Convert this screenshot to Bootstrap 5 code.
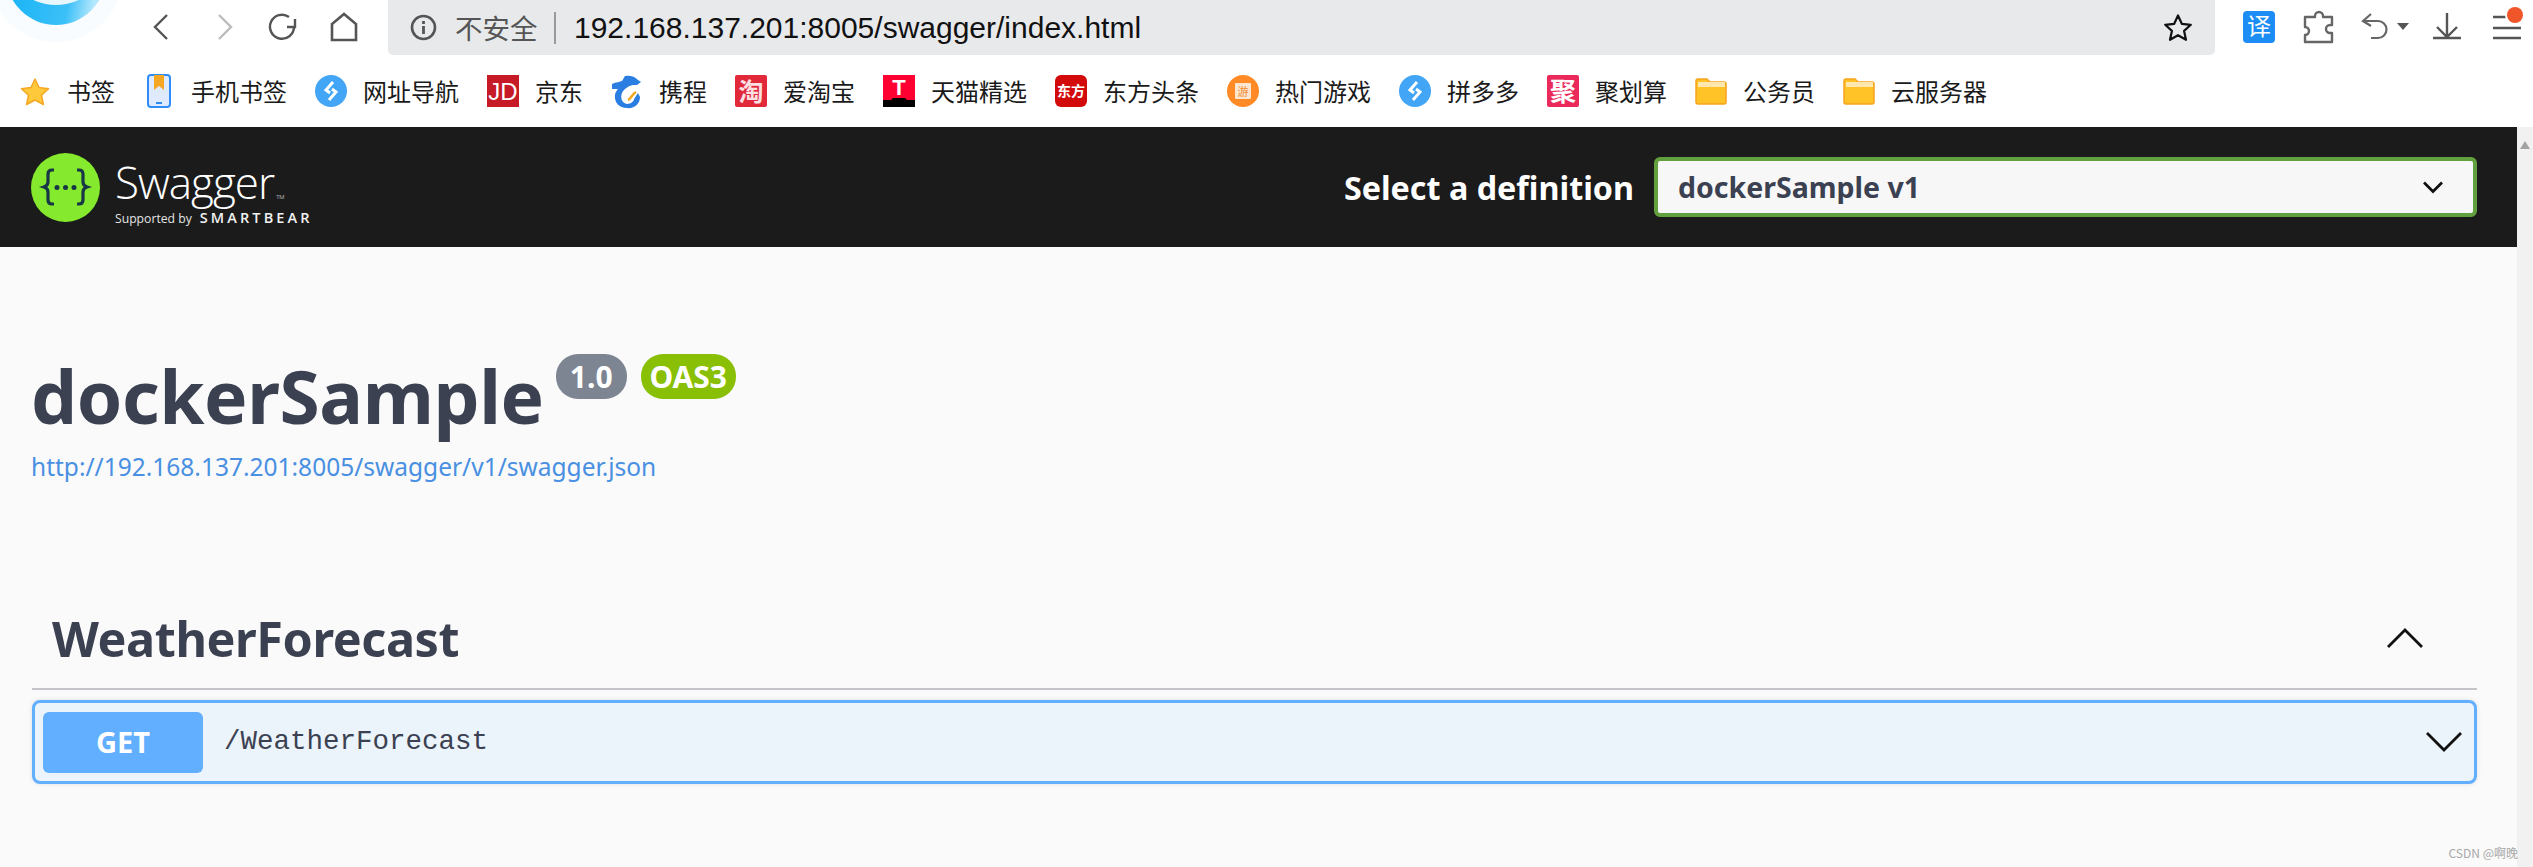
<!DOCTYPE html>
<html lang="zh-CN">
<head>
<meta charset="utf-8">
<title>Swagger UI</title>
<link href="https://cdn.jsdelivr.net/npm/bootstrap@5.3.0/dist/css/bootstrap.min.css" rel="stylesheet">
<style>
html,body{height:100%;overflow:hidden;background:#fff}
body{font-family:"Noto Sans","Noto Sans CJK SC",sans-serif;color:#3b4151}
.cn{font-family:"Noto Sans CJK SC",sans-serif}
.tool-row{height:55px}
.tool-left{width:388px;height:55px;flex:none}
.tool-right{width:318px;height:55px;flex:none}
.addr{background:#e8e9eb;border-radius:0 0 5px 5px;height:55px;padding:0 22px 0 22px}
.addr-label{font-size:27.5px;color:#555;margin-left:18px;width:84px;white-space:nowrap;line-height:1.2}
.addr-sep{width:2px;height:32px;background:#9a9a9a;margin:0 18px 0 15px}
.addr-url{font-family:"Liberation Sans",sans-serif;font-size:30px;color:#111;line-height:1.2}
.marks{height:72px;padding-left:19px;gap:28px;font-size:24px;color:#1a1a1a}
.mark-item{gap:16px}
.mark-item svg{width:32px;height:36px;flex:none}
.page-wrap{height:740px}
.page-main{background:#fafafa;min-width:0}
.sbar{width:16px;background:#f1f1f1;flex:none}
.sbar svg{display:block;width:16px;height:36px}
.topbar{height:120px;background:#1b1b1b;padding:0 40px 0 31px}
.sw-mark{width:69px;height:69px;flex:none}
.sw-brand{margin-left:15px;color:#fff;line-height:1}
.sw-name{font-family:"Open Sans",sans-serif;font-weight:300;font-size:44px;line-height:50px;letter-spacing:-1px;margin-top:8px}
.sw-name sup{font-size:6px;letter-spacing:0;top:0;vertical-align:baseline;margin-left:2px}
.sw-sub{font-family:"Open Sans",sans-serif;font-size:12.2px;margin-top:4px;color:#e4e4e4;white-space:nowrap}
.sw-bear{font-weight:600;font-size:14.5px;letter-spacing:3.1px;margin-left:8px;color:#f2f2f2}
.def-label{font-size:32.3px;font-weight:700;color:#fff;margin-right:20px;line-height:1.2}
.def-select{width:823px;height:60px;border:4px solid #62a03f;border-radius:6px;background-color:#f7f7f7;color:#3b4151;font-size:28.5px;font-weight:700;padding:0 60px 0 20px;background-image:url("data:image/svg+xml,%3csvg xmlns='http://www.w3.org/2000/svg' viewBox='0 0 16 12'%3e%3cpath fill='none' stroke='%23111' stroke-width='1.8' d='M2 3l6 6 6-6'/%3e%3c/svg%3e");background-position:right 28px center;background-size:24px 18px;line-height:1.2}
.info-block{padding:101px 40px 0 31px}
.ttl{font-size:73px;font-weight:700;line-height:96px;margin:0;color:#3b4151;letter-spacing:-.4px}
.pill{height:45px;border-radius:22px;color:#fff;font-weight:700;font-size:30px;line-height:1;margin-top:6px}
.pill-ver{width:71px;background:#7d8492;margin-left:12px}
.pill-oas{width:95px;background:#89bf04;margin-left:14px}
.spec-link{font-size:24.5px;color:#4990e2;text-decoration:none;line-height:36px;display:block;margin-top:5px}
.tag-sec{padding:0 40px 0 32px;margin-top:103px}
.tag-head{height:102px;border-bottom:2px solid #c4c4c9;padding:0 54px 0 20px}
.tag-name{font-size:48.5px;font-weight:700;line-height:1.2;margin:0;color:#3b4151;letter-spacing:-.4px}
.op-row{margin-top:10px;height:84px;background:#ebf3fb;border:3px solid #61affe;border-radius:8px;box-shadow:0 0 5px rgba(0,0,0,.1);padding:0 12px 0 8px}
.op-verb{width:160px;height:61px;background:#61affe;border-radius:6px;color:#fff;font-weight:700;font-size:29px;border:0;padding:0}
.op-path{font-family:"Liberation Mono",monospace;font-size:27.5px;color:#3b4151;margin-left:21px}
.wm{position:absolute;right:15px;bottom:8px;font-size:12px;color:#a8a8a8;line-height:1}
</style>
</head>
<body>
<div class="d-flex tool-row">
  <svg class="tool-left" viewBox="0 0 388 55" fill="none">
    <defs><linearGradient id="lg" x1="0" y1="0" x2="1" y2=".2"><stop offset="0" stop-color="#0fb0f5"/><stop offset=".75" stop-color="#3cc0f8"/><stop offset="1" stop-color="#b5e8fc"/></linearGradient></defs>
    <circle cx="56" cy="-25" r="67" fill="#f8fcfe"/>
    <circle cx="56" cy="-25" r="50" fill="url(#lg)"/>
    <circle cx="56" cy="-48" r="53" fill="#e8f7fe"/>
    <path d="M167 15 155 27l12 12" stroke="#555" stroke-width="2.4"/>
    <path d="M219 15l12 12-12 12" stroke="#bbb" stroke-width="2.4"/>
    <path d="M294 27a12 12 0 1 1-5-10" stroke="#555" stroke-width="2.4"/>
    <path d="M295 19v8h-8" stroke="#555" stroke-width="2.4"/>
    <path d="M332 40V24l12-10 12 10v16z" stroke="#555" stroke-width="2.6"/>
  </svg>
  <div class="addr d-flex align-items-center flex-grow-1">
    <svg width="27" height="27" viewBox="0 0 27 27" fill="none"><circle cx="13.5" cy="13.5" r="11.5" stroke="#555" stroke-width="2.6"/><path d="M13.5 12v8M13.5 7v3" stroke="#555" stroke-width="2.8"/></svg>
    <span class="addr-label cn">不安全</span>
    <span class="addr-sep"></span>
    <span class="addr-url">192.168.137.201:8005/swagger/index.html</span>
    <svg class="ms-auto" width="30" height="30" viewBox="0 0 30 30" fill="none"><path d="M15 2.5l3.8 8.3 9 1-6.7 6.1 1.9 8.9-8-4.6-8 4.6 1.9-8.9-6.7-6.100 9-1z" stroke="#111" stroke-width="2.2" stroke-linejoin="round"/></svg>
  </div>
  <svg class="tool-right" viewBox="2215 0 318 55" fill="none">
    <rect x="2243" y="11" width="32" height="32" rx="4" fill="#1b8df5"/>
    <text x="2259" y="35" font-size="24" fill="#fff" text-anchor="middle" font-family="Noto Sans CJK SC">译</text>
    <path d="M2315 17v-1a4 4 0 0 1 8 0v1h9v8h-2a4 4 0 0 0 0 8h2v9h-27v-7a4 4 0 0 0 0-8v-10z" stroke="#666" stroke-width="2.4" stroke-linejoin="round"/>
    <path d="M2371 14l-8 7 8 5M2364 21h14a8.500 8.500 0 0 1 0 17h-7" stroke="#666" stroke-width="2.2"/>
    <path d="M2397 23h12l-6 7z" fill="#555"/>
    <path d="M2447 13v24M2437 27l10 10 10-10M2433 38h28" stroke="#555" stroke-width="2.4"/>
    <path d="M2493 17h14M2493 28h28M2493 38h28" stroke="#555" stroke-width="2.4"/>
    <circle cx="2515" cy="15" r="10" fill="#fff"/><circle cx="2515" cy="15" r="8" fill="#f1552a"/>
  </svg>
</div>
<div class="d-flex align-items-center marks cn">
  <div class="d-flex align-items-center mark-item"><svg viewBox="0 0 32 36"><path d="M16 6l4 8.500 9.500 1.200-7 6.500 1.900 9.300L16 27l-8.400 4.500 1.900-9.300-7-6.500L12 14.500z" fill="#ffc93c" stroke="#f5a623" stroke-width="1.500" stroke-linejoin="round"/></svg><span>书签</span></div>
  <div class="d-flex align-items-center mark-item"><svg viewBox="0 0 32 36"><rect x="5" y="2" width="22" height="32" rx="3" fill="#dfeaff" stroke="#2f8df5" stroke-width="2"/><path d="M11 2h10v15l-5-4-5 4z" fill="#f5a623"/><path d="M13 30h6" stroke="#2f8df5" stroke-width="2"/></svg><span>手机书签</span></div>
  <div class="d-flex align-items-center mark-item"><svg viewBox="0 0 32 36"><ellipse cx="16" cy="18" rx="16" ry="16" fill="#42a5f5"/><path d="M18 9l-7 8 4 3M14 27l7-8-4-3" stroke="#fff" stroke-width="3" fill="none"/></svg><span>网址导航</span></div>
  <div class="d-flex align-items-center mark-item"><svg viewBox="0 0 32 36"><rect y="2" width="32" height="32" fill="#c61a26"/><text x="16" y="27" font-size="24" fill="#fff" text-anchor="middle" font-family="Liberation Sans">JD</text></svg><span>京东</span></div>
  <div class="d-flex align-items-center mark-item"><svg viewBox="0 0 32 36"><path d="M14 3C18 2 24 3 27 7l3 2-4 3h-4c-5 1-9 4-11 8-2 5 0 10 5 11 4 0 7-3 7-5l4-6 2 4c0 7-6 12-13 11C8 35 3 29 4 22c0-2 2-5 3-6H1v-5c4-2 8-2 10-3z" fill="#2a7de1"/><path d="M25 19c-4 2-5 7-8 8" stroke="#f5a623" stroke-width="2.500" fill="none"/></svg><span>携程</span></div>
  <div class="d-flex align-items-center mark-item"><svg viewBox="0 0 32 36"><rect y="2" width="32" height="32" rx="2" fill="#e1293a"/><text x="16" y="28" font-size="25" font-weight="700" fill="#fbdfe2" text-anchor="middle" font-family="Noto Sans CJK SC">淘</text></svg><span>爱淘宝</span></div>
  <div class="d-flex align-items-center mark-item"><svg viewBox="0 0 32 36"><rect y="2" width="32" height="32" fill="#ff0033"/><path d="M0 27h8l2-2h12l2 2h8v7H0z" fill="#000"/><text x="16" y="22" font-size="22" font-weight="700" fill="#fff" text-anchor="middle" font-family="Liberation Sans">T</text></svg><span>天猫精选</span></div>
  <div class="d-flex align-items-center mark-item"><svg viewBox="0 0 32 36"><rect y="2" width="32" height="32" rx="6" fill="#d30a0a"/><text x="16" y="23" font-size="14" font-weight="700" fill="#fff" text-anchor="middle" font-family="Noto Sans CJK SC">东方</text></svg><span>东方头条</span></div>
  <div class="d-flex align-items-center mark-item"><svg viewBox="0 0 32 36"><ellipse cx="16" cy="18" rx="16" ry="16" fill="#ff8a26"/><rect x="8" y="10" width="16" height="16" rx="1" fill="#fde6cf"/><text x="16" y="23" font-size="11" fill="#f08a30" text-anchor="middle" font-family="Noto Sans CJK SC">游</text></svg><span>热门游戏</span></div>
  <div class="d-flex align-items-center mark-item"><svg viewBox="0 0 32 36"><ellipse cx="16" cy="18" rx="16" ry="16" fill="#42a5f5"/><path d="M18 9l-7 8 4 3M14 27l7-8-4-3" stroke="#fff" stroke-width="3" fill="none"/></svg><span>拼多多</span></div>
  <div class="d-flex align-items-center mark-item"><svg viewBox="0 0 32 36"><rect y="2" width="32" height="32" rx="2" fill="#ea2a5a"/><text x="16" y="28" font-size="26" font-weight="700" fill="#fff" text-anchor="middle" font-family="Noto Sans CJK SC">聚</text></svg><span>聚划算</span></div>
  <div class="d-flex align-items-center mark-item"><svg viewBox="0 0 32 36"><path d="M1 8a2 2 0 0 1 2-2h9l3 3h14a2 2 0 0 1 2 2v18a2 2 0 0 1-2 2H3a2 2 0 0 1-2-2z" fill="#ffc328" stroke="#f7a41d" stroke-width="1.500"/><path d="M3 9h27v5H3z" fill="#ffe7ad"/></svg><span>公务员</span></div>
  <div class="d-flex align-items-center mark-item"><svg viewBox="0 0 32 36"><path d="M1 8a2 2 0 0 1 2-2h9l3 3h14a2 2 0 0 1 2 2v18a2 2 0 0 1-2 2H3a2 2 0 0 1-2-2z" fill="#ffc328" stroke="#f7a41d" stroke-width="1.500"/><path d="M3 9h27v5H3z" fill="#ffe7ad"/></svg><span>云服务器</span></div>
</div>
<div class="d-flex page-wrap position-relative">
  <div class="page-main flex-grow-1">
    <div class="topbar d-flex align-items-center">
      <svg class="sw-mark" viewBox="0 0 69 69" fill="none">
        <circle cx="34.500" cy="34.500" r="34.500" fill="#85ea2d"/>
        <path d="M23 17h-2c-3 0-4 2-4 4v8c0 3-1 4-4 5 3 1 4 2 4 5v8c0 2 1 4 4 4h2M46 17h2c3 0 4 2 4 4v8c0 3 1 4 4 5-3 1-4 2-4 5v8c0 2-1 4-4 4h-2" stroke="#173646" stroke-width="3.200"/>
        <circle cx="26" cy="34.500" r="2.500" fill="#173646"/><circle cx="34.500" cy="34.500" r="2.500" fill="#173646"/><circle cx="43" cy="34.500" r="2.500" fill="#173646"/>
      </svg>
      <div class="sw-brand">
        <div class="sw-name">Swagger<sup>TM</sup></div>
        <div class="sw-sub">Supported by<span class="sw-bear">SMARTBEAR</span></div>
      </div>
      <label class="def-label ms-auto" for="defsel">Select a definition</label>
      <select class="form-select def-select" id="defsel"><option>dockerSample v1</option></select>
    </div>
    <div class="info-block">
      <div class="d-flex align-items-start">
        <h1 class="ttl">dockerSample</h1>
        <span class="pill pill-ver d-flex align-items-center justify-content-center">1.0</span>
        <span class="pill pill-oas d-flex align-items-center justify-content-center">OAS3</span>
      </div>
      <a class="spec-link" href="#">http://192.168.137.201:8005/swagger/v1/swagger.json</a>
    </div>
    <div class="tag-sec">
      <div class="tag-head d-flex align-items-center justify-content-between">
        <h2 class="tag-name">WeatherForecast</h2>
        <svg width="36" height="20" viewBox="0 0 36 20" fill="none"><path d="M1 19 18 2l17 17" stroke="#111" stroke-width="2.800"/></svg>
      </div>
      <div class="op-row d-flex align-items-center">
        <button class="op-verb btn" type="button">GET</button>
        <span class="op-path">/WeatherForecast</span>
        <svg class="ms-auto" width="36" height="20" viewBox="0 0 36 20" fill="none"><path d="M1 1l17 17L35 1" stroke="#111" stroke-width="2.800"/></svg>
      </div>
    </div>
  </div>
  <div class="sbar"><svg viewBox="0 0 16 36"><path d="M3 22 8 14l5 8z" fill="#a3a3a3"/></svg></div>
  <div class="wm cn">CSDN @啊晚</div>
</div>
<script src="https://cdn.jsdelivr.net/npm/bootstrap@5.3.0/dist/js/bootstrap.bundle.min.js"></script>
</body>
</html>
